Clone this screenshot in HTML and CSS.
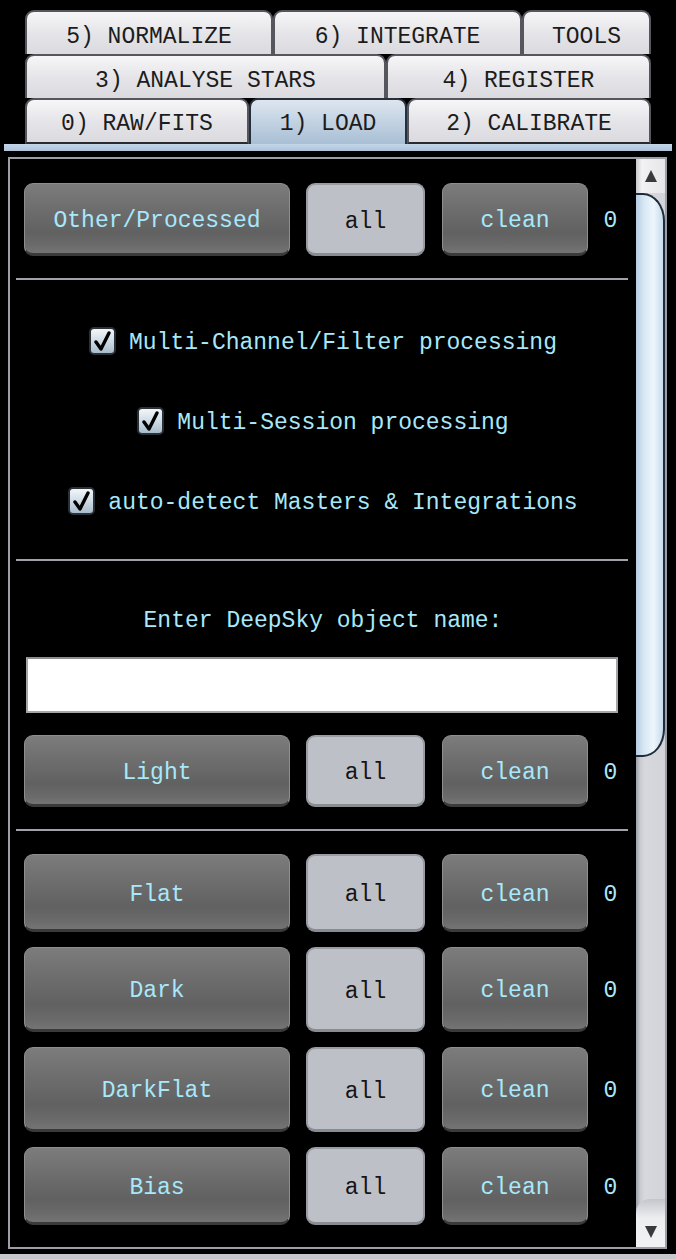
FILE: index.html
```html
<!DOCTYPE html>
<html>
<head>
<meta charset="utf-8">
<link rel="stylesheet" href="styles.css">
</head>
<body>
<div class="tabs">
  <div class="tabrow">
    <div class="tab w248">5) NORMALIZE</div>
    <div class="tab w249">6) INTEGRATE</div>
    <div class="tab w129">TOOLS</div>
  </div>
  <div class="tabrow">
    <div class="tab w361">3) ANALYSE STARS</div>
    <div class="tab w265">4) REGISTER</div>
  </div>
  <div class="tabrow last">
    <div class="tab w224">0) RAW/FITS</div>
    <div class="tab w158 selected">1) LOAD</div>
    <div class="tab w244">2) CALIBRATE</div>
  </div>
</div>
<div class="tabline"></div>

<div class="panel">
  <div class="content">
    <div class="filerow h73">
      <div class="btn main">Other/Processed</div>
      <div class="btn all">all</div>
      <div class="btn clean">clean</div>
      <div class="count">0</div>
    </div>
    <div class="sep sep1"></div>

    <div class="checkrow first">
      <span class="cb"><svg width="19" height="20" viewBox="0 0 19 20"><path d="M3 11 L8 18 L16 2" fill="none" stroke="#000" stroke-width="3.4" stroke-linecap="round" stroke-linejoin="round"/></svg></span>
      <span class="cbtext">Multi-Channel/Filter processing</span>
    </div>
    <div class="checkrow">
      <span class="cb"><svg width="19" height="20" viewBox="0 0 19 20"><path d="M3 11 L8 18 L16 2" fill="none" stroke="#000" stroke-width="3.4" stroke-linecap="round" stroke-linejoin="round"/></svg></span>
      <span class="cbtext">Multi-Session processing</span>
    </div>
    <div class="checkrow">
      <span class="cb"><svg width="19" height="20" viewBox="0 0 19 20"><path d="M3 11 L8 18 L16 2" fill="none" stroke="#000" stroke-width="3.4" stroke-linecap="round" stroke-linejoin="round"/></svg></span>
      <span class="cbtext">auto-detect Masters &amp; Integrations</span>
    </div>
    <div class="sep sep2"></div>

    <div class="label">Enter DeepSky object name:</div>
    <div class="input"></div>

    <div class="filerow h72 light">
      <div class="btn main">Light</div>
      <div class="btn all">all</div>
      <div class="btn clean">clean</div>
      <div class="count">0</div>
    </div>
    <div class="sep sep3"></div>

    <div class="filerow h78 r-flat">
      <div class="btn main">Flat</div>
      <div class="btn all">all</div>
      <div class="btn clean">clean</div>
      <div class="count">0</div>
    </div>
    <div class="filerow h85 r-next">
      <div class="btn main">Dark</div>
      <div class="btn all">all</div>
      <div class="btn clean">clean</div>
      <div class="count">0</div>
    </div>
    <div class="filerow h85 r-next">
      <div class="btn main">DarkFlat</div>
      <div class="btn all">all</div>
      <div class="btn clean">clean</div>
      <div class="count">0</div>
    </div>
    <div class="filerow h78 r-next">
      <div class="btn main">Bias</div>
      <div class="btn all">all</div>
      <div class="btn clean">clean</div>
      <div class="count">0</div>
    </div>
  </div>
  <div class="scrollbar">
    <div class="sb-up"><svg width="12" height="12" viewBox="0 0 12 12"><path d="M6 0 L12 12 L0 12 Z" fill="#3a3a3e"/></svg></div>
    <div class="sb-track">
      <div class="sb-thumb"></div>
      <div class="sb-rest"></div>
      <div class="sb-down"><svg width="12" height="12" viewBox="0 0 12 12"><path d="M0 0 L12 0 L6 12 Z" fill="#3a3a3e"/></svg></div>
    </div>
  </div>
</div>
<div class="bottomline"></div>
</body>
</html>
```

FILE: styles.css
```css
html, body {
  margin: 0;
  padding: 0;
  background: #000;
  height: 1259px;
  overflow: hidden;
}
body {
  font-family: "Courier New", "Nimbus Mono PS", "Nimbus Mono L", "FreeMono", "Courier", "Liberation Mono", monospace;
  font-size: 23px;
  padding-top: 10px;
  box-sizing: border-box;
}
.tabs {
  margin-left: 25px;
  width: 626px;
}
.tabrow {
  display: flex;
  height: 44px;
}
.tabrow.last {
  height: 46px;
}
.tab {
  box-sizing: border-box;
  height: 100%;
  border: 2px solid #56575e;
  border-bottom: none;
  border-radius: 9px 9px 0 0;
  background: linear-gradient(#f6f6f8, #e4e4e8 55%, #dadadf);
  color: #1c1c1c;
  display: flex;
  align-items: center;
  justify-content: center;
  padding-top: 8px;
  white-space: nowrap;
}
.tabrow.last .tab {
  border-bottom: 2px solid #2a2b30;
  padding-top: 6px;
}
.tabrow.last .tab.selected {
  border-color: #26303c;
  border-bottom: none;
  padding-top: 4px;
  background: linear-gradient(#dde6ef, #c2d2e2 50%, #a9bfd4);
}
.w248 { width: 248px; }
.w249 { width: 249px; }
.w129 { width: 129px; }
.w361 { width: 361px; }
.w265 { width: 265px; }
.w224 { width: 224px; }
.w158 { width: 158px; }
.w244 { width: 244px; }

.tabline {
  height: 7px;
  margin: 0 4px;
  background: linear-gradient(#c4d6e8, #aec4da);
}
.panel {
  box-sizing: border-box;
  margin: 6px 9px 0 8px;
  height: 1092px;
  border: 2px solid #9d9ea6;
  display: flex;
  overflow: hidden;
}
.content {
  flex: 1;
  padding: 24px 14px 0 14px;
  overflow: hidden;
  color: #a8e8fa;
}
.filerow {
  display: flex;
  align-items: stretch;
}
.h73 { height: 73px; }
.h72 { height: 72px; }
.h78 { height: 78px; }
.h85 { height: 85px; }
.btn {
  box-sizing: border-box;
  display: flex;
  align-items: center;
  justify-content: center;
  border-radius: 9px;
  white-space: nowrap;
  padding-top: 5px;
}
.btn.main, .btn.clean {
  border: 1px solid #8e8e92;
  border-bottom: 3px solid #3a3a3c;
  background: linear-gradient(#7c7c7c, #6c6c6c 40%, #616161 70%, #6a6a6a 88%, #747474);
  color: #a8e8fa;
}
.btn.main { width: 266px; margin-right: 16px; }
.btn.all {
  width: 119px;
  margin-right: 17px;
  background: #bec0c8;
  border: 2px solid #9a9ca4;
  border-bottom: 3px solid #8a8c94;
  color: #151515;
}
.btn.clean { width: 146px; }
.count {
  flex: 1;
  display: flex;
  align-items: center;
  justify-content: center;
  padding-right: 3px;
  padding-top: 3px;
  margin-right: -14px;
}
.sep {
  height: 2px;
  background: #a2a3aa;
  margin-left: -8px;
  width: 612px;
}
.sep1 { margin-top: 22px; }
.sep2 { margin-top: 38px; }
.sep3 { margin-top: 22px; }

.checkrow {
  height: 40px;
  margin-top: 40px;
  display: flex;
  align-items: center;
  justify-content: center;
  white-space: nowrap;
}
.checkrow.first { margin-top: 41px; }
.cbtext { padding-top: 4px; }
.cb {
  box-sizing: border-box;
  width: 27px;
  height: 28px;
  border: 2px solid #2a2f38;
  border-radius: 5px;
  background: linear-gradient(#f2f6fa, #d0dce6 50%, #a9bccc);
  display: flex;
  align-items: center;
  justify-content: center;
  margin-right: 13px;
}
.cb svg { display: block; }
.label {
  height: 30px;
  line-height: 30px;
  margin-top: 42px;
  padding-top: 3px;
  text-align: center;
}
.input {
  box-sizing: border-box;
  margin-top: 21px;
  margin-left: 2px;
  width: 592px;
  height: 56px;
  background: #fff;
  border: 2px solid #a6a6aa;
  border-top-color: #8e8e92;
}
.light { margin-top: 22px; }
.r-flat { margin-top: 23px; }
.r-next { margin-top: 15px; }

.scrollbar {
  width: 29px;
  display: flex;
  flex-direction: column;
  background: #d4d6dc;
}
.sb-up {
  height: 34px;
  flex: none;
  background: linear-gradient(to right, #c8c8cc, #f2f2f4 20%, #e6e6ea);
  display: flex;
  align-items: center;
  justify-content: center;
}
.sb-track {
  flex: 1;
  display: flex;
  flex-direction: column;
  background: linear-gradient(to right, #9c9ea6, #c8cad0 4px, #d6d8de 30%, #d2d4da);
}
.sb-thumb {
  box-sizing: border-box;
  height: 564px;
  flex: none;
  border: 2px solid #1f2b3a;
  border-left: none;
  border-radius: 0 22px 22px 0 / 0 28px 28px 0;
  background: linear-gradient(to right, #b5cde2, #d8e8f4 30%, #eef5fb 65%, #c6dbec);
}
.sb-rest { flex: 1; }
.sb-down {
  height: 48px;
  flex: none;
  background: linear-gradient(#c4c6cc, #eceef0 40%, #f2f2f4);
  border-top-left-radius: 14px;
  display: flex;
  align-items: flex-end;
  justify-content: center;
  padding-bottom: 9px;
  box-sizing: border-box;
}
.bottomline {
  margin-top: 5px;
  height: 10px;
  background: #c6c7cd;
}
```
